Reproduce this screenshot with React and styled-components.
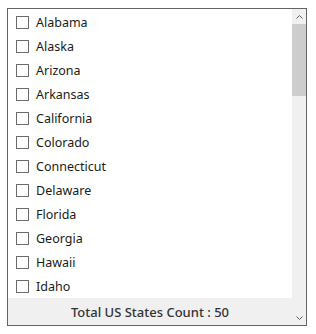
import React from 'react';
import styled, { createGlobalStyle } from 'styled-components';

const GlobalStyle = createGlobalStyle`
  html, body {
    margin: 0;
    padding: 0;
    background: #ffffff;
  }
  body {
    font-family: "Noto Sans", "Open Sans", sans-serif;
  }
`;

const Page = styled.div`
  padding: 8px 0 0 7px;
`;

const Box = styled.div`
  width: 300px;
  height: 318px;
  box-sizing: border-box;
  border: 1px solid #646464;
  display: grid;
  grid-template-columns: 1fr 14px;
  grid-template-rows: 1fr 27px;
  background: #ffffff;
`;

const List = styled.ul`
  grid-column: 1;
  grid-row: 1;
  list-style: none;
  margin: 0;
  padding: 1px 0 0;
  overflow: hidden;
`;

const Row = styled.li`
  height: 24px;
  display: flex;
  align-items: center;
  padding-left: 8px;
  gap: 7px;
  font-size: 12.5px;
  color: #1b1b1b;
`;

const Check = styled.span`
  width: 13px;
  height: 13px;
  box-sizing: border-box;
  border: 1px solid #6b6b6b;
  background: #fff;
  flex: none;
`;

const Footer = styled.div`
  grid-column: 1;
  grid-row: 2;
  background: #f0f0f0;
  display: flex;
  align-items: center;
  justify-content: center;
  font-size: 13px;
  font-weight: 500;
  color: #333333;
`;

const Scrollbar = styled.div`
  grid-column: 2;
  grid-row: 1 / span 2;
  background: #f0f0f0;
  display: flex;
  flex-direction: column;
`;

const Arrow = styled.div`
  height: 15px;
  display: flex;
  align-items: center;
  justify-content: center;
  margin-top: ${p => (p.$down ? 'auto' : '0')};
`;

const Thumb = styled.div`
  height: 72px;
  background: #cdcdcd;
`;

const states = [
  'Alabama', 'Alaska', 'Arizona', 'Arkansas', 'California', 'Colorado',
  'Connecticut', 'Delaware', 'Florida', 'Georgia', 'Hawaii', 'Idaho',
  'Illinois', 'Indiana', 'Iowa', 'Kansas', 'Kentucky', 'Louisiana', 'Maine',
  'Maryland', 'Massachusetts', 'Michigan', 'Minnesota', 'Mississippi',
  'Missouri', 'Montana', 'Nebraska', 'Nevada', 'New Hampshire', 'New Jersey',
  'New Mexico', 'New York', 'North Carolina', 'North Dakota', 'Ohio',
  'Oklahoma', 'Oregon', 'Pennsylvania', 'Rhode Island', 'South Carolina',
  'South Dakota', 'Tennessee', 'Texas', 'Utah', 'Vermont', 'Virginia',
  'Washington', 'West Virginia', 'Wisconsin', 'Wyoming'
];

// only the rows that fit in the viewport at scroll top
const visible = states.slice(0, 12);

function Chevron({ down }) {
  return (
    <svg width="7" height="4" viewBox="0 0 7 4">
      <path
        d={down ? 'M0.5 0.5 L3.5 3.5 L6.5 0.5' : 'M0.5 3.5 L3.5 0.5 L6.5 3.5'}
        fill="none"
        stroke="#606060"
        strokeWidth="1"
      />
    </svg>
  );
}

export default function App() {
  return (
    <Page>
      <GlobalStyle />
      <Box>
        <List>
          {visible.map(s => (
            <Row key={s}>
              <Check />
              {s}
            </Row>
          ))}
        </List>
        <Footer>Total US States Count : {states.length}</Footer>
        <Scrollbar>
          <Arrow><Chevron /></Arrow>
          <Thumb />
          <Arrow $down><Chevron down /></Arrow>
        </Scrollbar>
      </Box>
    </Page>
  );
}
